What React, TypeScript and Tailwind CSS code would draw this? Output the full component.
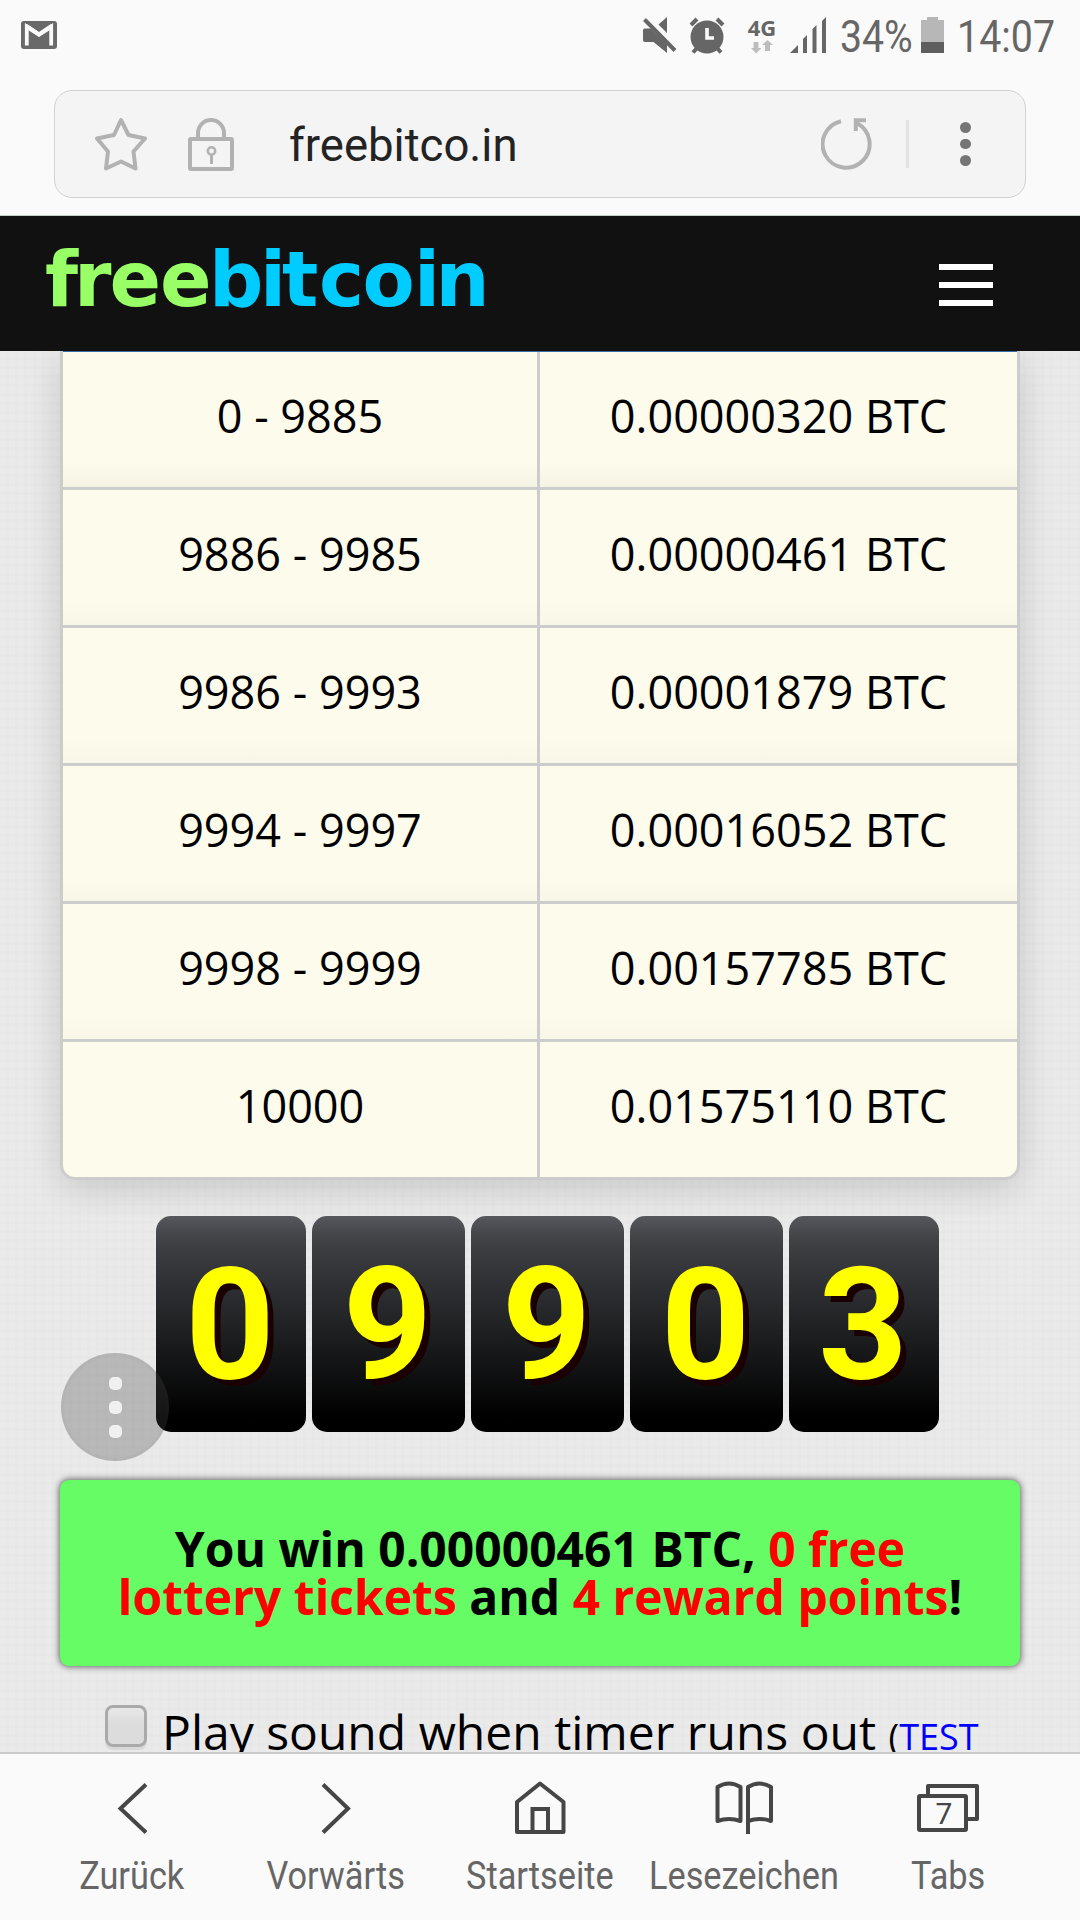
import React from "react";

const rows = [
  ["0 - 9885", "0.00000320 BTC"],
  ["9886 - 9985", "0.00000461 BTC"],
  ["9986 - 9993", "0.00001879 BTC"],
  ["9994 - 9997", "0.00016052 BTC"],
  ["9998 - 9999", "0.00157785 BTC"],
  ["10000", "0.01575110 BTC"],
];

const digits = ["0", "9", "9", "0", "3"];

function StatusBar() {
  return (
    <div className="flex h-[72px] items-start pl-[21px] pr-[20px] pt-[17px] font-['Roboto',sans-serif] text-[#666]">
      <svg className="mt-[4px] h-[28px] w-[36px]" viewBox="0 0 36 28">
        <rect width="36" height="28" rx="3" fill="#696969" />
        <path d="M5.8 24.5V5.5L18 13.5 30.2 5.5V24.5" fill="none" stroke="#fafafa" strokeWidth="3.8" />
        <path d="M4 3.2 6.5 3.2 18 11 29.5 3.2 32 3.2 32 7 18 16 4 7Z" fill="#fafafa" />
      </svg>
      <svg className="ml-[586px] h-[36px] w-[34px]" viewBox="0 0 34 36" fill="#666">
        <path d="M24 0V16L15.5 7.5ZM2 11.5H8L24 27.500V36L10.500 25H2Q0 25 0 23V13Q0 11.500 2 11.500Z" />
        <path d="M1.500 2.500 32 33.500" stroke="#666" strokeWidth="4" />
      </svg>
      <svg className="ml-[12px] h-[37px] w-[36px]" viewBox="0 0 36 37">
        <path d="M2 8 8 2M34 8 28 2M4 35.500 8 31M32 35.500 28 31" stroke="#666" strokeWidth="4" />
        <circle cx="18" cy="20" r="16.500" fill="#666" />
        <path d="M18 11V21H25" fill="none" stroke="#fafafa" strokeWidth="3.600" />
      </svg>
      <div className="ml-[22px] flex w-[30px] flex-col items-center">
        <span className="h-[23px] text-[22px] font-bold leading-[20px] font-['Open_Sans',sans-serif]">4G</span>
        <svg className="h-[14px] w-[22px]" viewBox="0 0 22 14" fill="#bdbdbd">
          <path d="M2.500 2H7.500V8H10.500L5 13.500 0 8H2.500ZM14 11H19V5H22L16.500 0 11 5H14Z" />
        </svg>
      </div>
      <svg className="ml-[13px] h-[36px] w-[36px]" viewBox="0 0 36 36" fill="#666">
        <path d="M0 36 8 28V36ZM13 36V22L17 18V36ZM22.500 36V12L26.500 8V36ZM32 36V4L36 0V36Z" />
      </svg>
      <span className="ml-[14px] mt-[-7px] w-[79px] origin-left scale-x-[0.87] text-[45px] leading-[53px]">34%</span>
      <svg className="ml-[2px] h-[36px] w-[23px]" viewBox="0 0 23 36">
        <path d="M0 3H6V0H17V3H23V25H0Z" fill="#b7b7b7" />
        <path d="M0 25H23V36H0Z" fill="#5e5e5e" />
      </svg>
      <span className="ml-[13px] mt-[-7px] w-[100px] origin-left scale-x-[0.875] text-[45px] leading-[53px]">14:07</span>
    </div>
  );
}

function AddressBar() {
  return (
    <div className="h-[144px] border-b border-[#c8cfc8] px-[54px] pt-[18px]">
      <div className="flex h-[108px] items-center rounded-[18px] border border-[#d2d2d2] bg-[#f4f4f4] pl-[40px]">
        <svg className="h-[54px] w-[52px] shrink-0" viewBox="0 0 52 54" fill="none" stroke="#b2b2b2" strokeWidth="4" strokeLinejoin="round">
          <path d="M26 3 33.500 18 50 21.500 38.500 34.500 40.500 51.500 26 44.500 11 51.500 13 34.500 2 21.500 19 18Z" />
        </svg>
        <svg className="ml-[41px] h-[53px] w-[46px] shrink-0" viewBox="0 0 46 53" fill="none" stroke="#b2b2b2" strokeWidth="4">
          <rect x="2" y="21" width="42" height="30" rx="1" />
          <path d="M10 20V15A13 13 0 0 1 36 15V20" />
          <circle cx="23.500" cy="33" r="3.700" strokeWidth="2.500" />
          <path d="M23.500 36V46" strokeWidth="3" />
        </svg>
        <span className="ml-[55px] mt-[4px] w-[532px] font-['Roboto',sans-serif] text-[45.500px] text-[#232323]">freebitco.in</span>
        <svg className="h-[52px] w-[52px] shrink-0" viewBox="0 0 52 52" fill="none" stroke="#b2b2b2" strokeWidth="4">
          <path d="M20 3.200A23.500 23.500 0 1 0 36 5.300" />
          <path d="M34.800 13V2.200H45" />
        </svg>
        <div className="ml-[33px] h-[48px] w-[3px] shrink-0 bg-[#e3e3e3]" />
        <div className="ml-[51px] flex flex-col gap-[6px]">
          <i className="size-[10.500px] rounded-full bg-[#757575]" />
          <i className="size-[10.500px] rounded-full bg-[#757575]" />
          <i className="size-[10.500px] rounded-full bg-[#757575]" />
        </div>
      </div>
    </div>
  );
}

function SiteHeader() {
  return (
    <header className="flex h-[135px] items-start justify-between bg-[#111] pl-[46px] pr-[87px]">
      <svg className="mt-[20px] h-[90px] w-[445px] overflow-visible" viewBox="0 0 445 90" fontFamily="DejaVu Sans, sans-serif" fontWeight="700" fontSize="76">
        <text x="-1 28 63.5 114" y="70" fill="#99ff66">free</text>
        <text x="163 214 236 273 316.5 368 389.5" y="70" fill="#00ccff">bitcoin</text>
      </svg>
      <div className="mt-[48px] flex w-[54px] flex-col gap-[12px]">
        <div className="h-[6px] bg-white" />
        <div className="h-[6px] bg-white" />
        <div className="h-[6px] bg-white" />
      </div>
    </header>
  );
}

function PrizeTable() {
  return (
    <div className="mx-auto w-[960px] overflow-hidden rounded-b-[15px] border-x-[3px] border-b-[3px] border-[#ccc] bg-[#fdfbeb] shadow-[0_9px_36px_rgba(0,0,0,0.15)]">
      <div className="mx-[-3px] h-[1px] bg-[#3a6ea5]" />
      {rows.map(([range, prize], i) => (
        <div
          key={range}
          className={
            i === rows.length - 1
              ? "flex h-[135px]"
              : i === 0
                ? "flex h-[138px] border-b-[3px] border-[#ccc] bg-[linear-gradient(#fdfbeb_82%,#f5f3e4)]"
                : "flex h-[138px] border-b-[3px] border-[#ccc] bg-[linear-gradient(#fdfbeb_82%,#f8f6e7)]"
          }
        >
          <div className="flex w-[477px] items-center justify-center border-r-[3px] border-[#ccc] pb-[8px]">{range}</div>
          <div className="flex flex-1 items-center justify-center pb-[8px]">{prize}</div>
        </div>
      ))}
    </div>
  );
}

function NavItem({ label, children }: { label: string; children: React.ReactNode }) {
  return (
    <div className="flex w-[204px] flex-col items-center">
      <svg className="h-[60px] w-[70px]" viewBox="0 0 70 60" fill="none" stroke="#464646" strokeWidth="4">
        {children}
      </svg>
      <span className="mt-[15px] scale-x-[0.88] whitespace-nowrap text-[39px] leading-[46px]">{label}</span>
    </div>
  );
}

function BottomNav() {
  return (
    <nav className="flex h-[168px] border-t-2 border-[#c9c9c9] bg-[#fafafa] px-[30px] pt-[24px] font-['Roboto',sans-serif] text-[#666]">
      <NavItem label="Zurück">
        <path d="M49 6.500 23.500 30.500 49 54.500" />
      </NavItem>
      <NavItem label="Vorwärts">
        <path d="M22 6.500 47 30.500 22 54.500" />
      </NavItem>
      <NavItem label="Startseite">
        <path d="M12 54V24L35 5.500 58.500 24V54Z" strokeLinejoin="round" />
        <path d="M27.500 54V31H43V54" />
      </NavItem>
      <NavItem label="Lesezeichen">
        <path d="M8.500 9Q20 2 31.500 9V43Q20 39 8.500 43ZM39 56V9Q50.500 2 62 9V43Q50.500 39 39 43" strokeLinejoin="round" />
      </NavItem>
      <NavItem label="Tabs">
        <path d="M15 18V8H64V41H54" strokeLinejoin="round" />
        <rect x="6" y="18" width="47" height="34" rx="1" />
        <text x="31" y="45.500" textAnchor="middle" fontSize="30" fill="#464646" stroke="none" fontFamily="Roboto, sans-serif">7</text>
      </NavItem>
    </nav>
  );
}

export default function App() {
  return (
    <div className="h-[1920px] w-[1080px] overflow-hidden bg-[#fafafa]">
      <StatusBar />
      <AddressBar />
      <SiteHeader />
      <main className="relative h-[1401px] overflow-hidden bg-[#eaeaea] bg-[repeating-linear-gradient(#0000_0_6px,#00000002_6px_9px),repeating-linear-gradient(90deg,#0000_0_6px,#00000002_6px_9px)] font-['Open_Sans',sans-serif] text-[45px] text-black">
        <div className="mt-[-1px] pt-[1px]">
          <PrizeTable />
        </div>
        <div className="ml-[156px] mt-[36px] flex gap-[6px]">
          {digits.map((d, i) => (
            <div
              key={i}
              className="flex h-[216px] w-[153px] items-center justify-center rounded-[15px] bg-[linear-gradient(#57585d,#45474b_8%,#3c3e42_14%,#000_94%)] pr-[2px] pt-[1px] font-['Roboto',sans-serif] text-[156px] font-bold leading-none text-[#ff0] [text-shadow:6px_6px_0_#1a0000] first:w-[150px] last:w-[150px]"
            >
              {d}
            </div>
          ))}
        </div>
        <div className="absolute left-[61px] top-[1002px] flex size-[108px] flex-col items-center justify-center gap-[11px] rounded-full border-[3px] border-[#44444408] bg-[#4444444d]">
          <i className="size-[13px] rounded-[5px] bg-[#f0f0f0]" />
          <i className="size-[13px] rounded-[5px] bg-[#f0f0f0]" />
          <i className="size-[13px] rounded-[5px] bg-[#f0f0f0]" />
        </div>
        <div className="mx-auto mt-[48px] flex h-[186px] w-[960px] flex-col items-center justify-center rounded-[9px] bg-[#66fc66] text-center text-[48px] font-bold leading-[48px] shadow-[0_0_6px_1px_#666]">
          <p>You win 0.00000461 BTC, <span className="text-[#f00]">0 free</span></p>
          <p><span className="text-[#f00]">lottery tickets</span> and <span className="text-[#f00]">4 reward points</span>!</p>
        </div>
        <div className="ml-[105px] mt-[39px] flex items-start">
          <div className="size-[42px] shrink-0 rounded-[8px] border-[3px] border-[#aaa] bg-[linear-gradient(#e8e8e8,#dcdcdc_40%)] shadow-[0_3px_0_#d8d8d8]" />
          <p className="ml-[15px] mt-[-6px] whitespace-nowrap text-[48px] leading-[66px]">
            Play sound when timer runs out <span className="text-[36px]">(<span className="text-[#00f]">TEST</span></span>
          </p>
        </div>
      </main>
      <BottomNav />
    </div>
  );
}
